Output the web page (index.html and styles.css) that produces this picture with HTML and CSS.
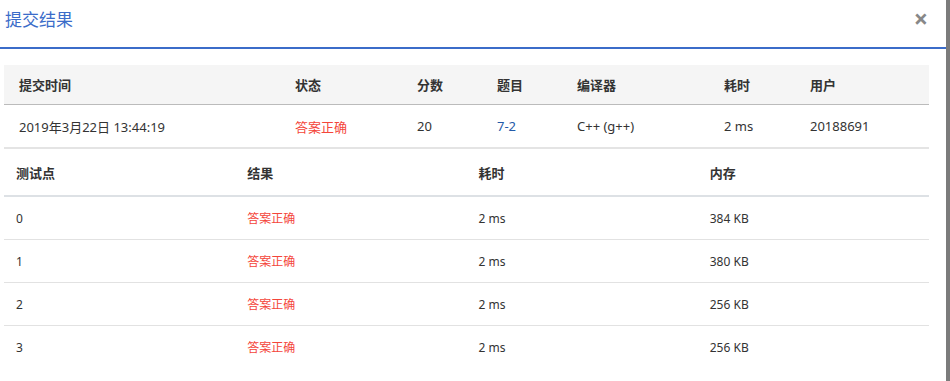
FILE: index.html
```html
<!DOCTYPE html>
<html lang="zh-CN">
<head>
  <meta charset="UTF-8" />
  <meta name="viewport" content="width=device-width, initial-scale=1.0"/>
  <title>提交结果</title>
  <link rel="stylesheet" href="styles.css">
</head>
<body>

  <div class="modal">
    <header class="modal-header">
      <h1>提交结果</h1>
      <span class="close">&times;</span>
    </header>

    <div class="modal-body">
      <table class="summary">
        <thead>
          <tr>
            <th class="c-time">提交时间</th>
            <th class="c-status">状态</th>
            <th class="c-score">分数</th>
            <th class="c-problem">题目</th>
            <th class="c-compiler">编译器</th>
            <th class="c-cost">耗时</th>
            <th>用户</th>
          </tr>
        </thead>
        <tbody>
          <tr>
            <td>2019年3月22日 13:44:19</td>
            <td class="ok">答案正确</td>
            <td>20</td>
            <td><a href="#">7-2</a></td>
            <td>C++ (g++)</td>
            <td>2 ms</td>
            <td>20188691</td>
          </tr>
        </tbody>
      </table>

      <table class="cases">
        <thead>
          <tr>
            <th>测试点</th>
            <th>结果</th>
            <th>耗时</th>
            <th>内存</th>
          </tr>
        </thead>
        <tbody>
          <tr><td>0</td><td class="ok">答案正确</td><td>2 ms</td><td>384 KB</td></tr>
          <tr><td>1</td><td class="ok">答案正确</td><td>2 ms</td><td>380 KB</td></tr>
          <tr><td>2</td><td class="ok">答案正确</td><td>2 ms</td><td>256 KB</td></tr>
          <tr><td>3</td><td class="ok">答案正确</td><td>2 ms</td><td>256 KB</td></tr>
        </tbody>
      </table>
    </div>
  </div>
  <div class="backdrop"></div>

</body>
</html>
```

FILE: styles.css
```css
html, body {
  height: 100%;
}

body {
  margin: 0;
  display: flex;
  font-family: 'Noto Sans', 'Noto Sans CJK SC', sans-serif;
  color: #333;
  background: #fff;
  overflow: hidden;
}

.modal {
  width: 946px;
  flex-shrink: 0;
  background: #fff;
}

.backdrop {
  flex: 1;
  background: #7b7b7b;
}

.modal-header {
  height: 49px;
  border-bottom: 2px solid #3b6cc9;
  display: flex;
  align-items: center;
  justify-content: space-between;
  padding: 0 18px 11px 5px;
  box-sizing: border-box;
}

.modal-header h1 {
  margin: 0;
  font-size: 17px;
  font-weight: normal;
  color: #3b6cc9;
}

.close {
  font-size: 25px;
  font-weight: bold;
  color: #888;
  line-height: 1;
}

.modal-body {
  padding: 16px 0 0 4px;
}

table {
  width: 925px;
  border-collapse: collapse;
  table-layout: fixed;
}

/* summary table */
.summary {
  font-size: 13px;
}

.summary th {
  height: 39px;
  background: #f5f5f5;
  border-bottom: 1px solid #bbb;
  text-align: left;
  padding: 0 15px;
  font-weight: bold;
}

.summary td {
  height: 42px;
  padding: 0 15px;
  border-bottom: 2px solid #e4e4e4;
}

.c-time { width: 246px; }
.c-status { width: 92px; }
.c-score { width: 50px; }
.c-problem { width: 50px; }
.c-compiler { width: 117px; }
.c-cost { width: 56px; }

.summary a {
  color: #245aa8;
  text-decoration: none;
}

.ok {
  color: #f4453a;
}

/* test case table */
.cases {
  font-size: 12px;
}

.cases th {
  height: 46px;
  padding: 0 12px;
  text-align: left;
  font-size: 13px;
  font-weight: bold;
  border-bottom: 2px solid #dde1e5;
}

.cases td {
  height: 42px;
  padding: 0 12px;
  border-top: 1px solid #e2e2e2;
}

.cases tbody tr:first-child td {
  border-top: none;
}
```
